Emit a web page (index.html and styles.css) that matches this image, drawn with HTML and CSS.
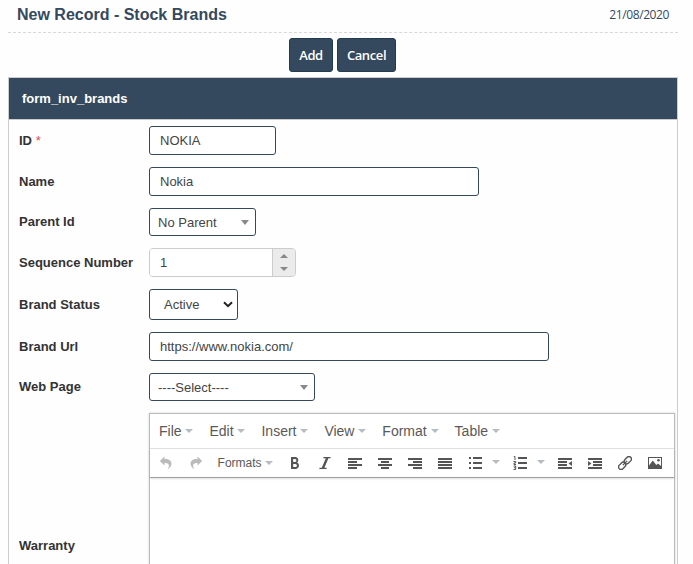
FILE: index.html
```
<!DOCTYPE html>
<html lang="en">
<head>
    <meta charset="UTF-8">
    <meta name="viewport" content="width=device-width, initial-scale=1.0">
    <title>New Record - Stock Brands</title>
    <link rel="stylesheet" href="styles.css">
</head>
<body>
    <div class="page-header">
        <h1 class="page-title">New Record - Stock Brands</h1>
        <span class="page-date">21/08/2020</span>
    </div>

    <div class="actions">
        <button class="btn btn-add" type="button">Add</button>
        <button class="btn btn-cancel" type="button">Cancel</button>
    </div>

    <div class="panel">
        <div class="panel-heading">form_inv_brands</div>
        <div class="panel-body">
            <div class="form-row">
                <label class="form-label" for="id">ID <span class="required">*</span></label>
                <input class="field field-id" id="id" type="text" value="NOKIA">
            </div>
            <div class="form-row">
                <label class="form-label" for="name">Name</label>
                <input class="field field-name" id="name" type="text" value="Nokia">
            </div>
            <div class="form-row">
                <span class="form-label label-combo">Parent Id</span>
                <div class="combo combo-parent"><span>No Parent</span><i class="arrow-down"></i></div>
            </div>
            <div class="form-row">
                <label class="form-label" for="seq">Sequence Number</label>
                <div class="spinner">
                    <input class="spinner-input" id="seq" type="text" value="1">
                    <div class="spinner-buttons">
                        <i class="arrow-up"></i>
                        <i class="arrow-down"></i>
                    </div>
                </div>
            </div>
            <div class="form-row">
                <span class="form-label">Brand Status</span>
                <div class="status-select">
                    <span>Active</span>
                    <svg width="10" height="7" viewBox="0 0 10 7"><path d="M1 1.2 L5 5.2 L9 1.2" fill="none" stroke="#222" stroke-width="2"/></svg>
                </div>
            </div>
            <div class="form-row">
                <label class="form-label" for="url">Brand Url</label>
                <input class="field field-url" id="url" type="text" value="https://www.nokia.com/">
            </div>
            <div class="form-row">
                <span class="form-label label-combo">Web Page</span>
                <div class="combo combo-web"><span>----Select----</span><i class="arrow-down"></i></div>
            </div>
            <div class="form-row form-row-editor">
                <span class="form-label">Warranty</span>
                <div class="editor">
                    <div class="menubar">
                        <span class="menu">File<i class="caret"></i></span>
                        <span class="menu">Edit<i class="caret"></i></span>
                        <span class="menu">Insert<i class="caret"></i></span>
                        <span class="menu">View<i class="caret"></i></span>
                        <span class="menu">Format<i class="caret"></i></span>
                        <span class="menu">Table<i class="caret"></i></span>
                    </div>
                    <div class="toolbar">
                        <span class="tool disabled"><svg class="icon" viewBox="0 0 14 14"><path d="M5.5 .5 L.8 5 L5.5 9.5 V7 C9.8 6.6 11 9 8.8 13.4 C15 8.5 13 2.6 5.5 3 Z"/></svg></span>
                        <span class="tool disabled"><svg class="icon" viewBox="0 0 14 14"><path d="M8.5 .5 L13.2 5 L8.5 9.5 V7 C4.2 6.6 3 9 5.2 13.4 C-1 8.5 1 2.6 8.5 3 Z"/></svg></span>
                        <span class="tool tool-formats">Formats<i class="caret"></i></span>
                        <!-- bold / italic -->
                        <span class="tool"><svg class="icon" viewBox="0 0 14 14"><path fill-rule="evenodd" d="M3 1 H7.4 C10.6 1 11.2 5.3 9 6.6 C12.2 7.8 11.4 13 7.6 13 H3 Z M5.2 3 V6 H7 C8.9 6 8.9 3 7 3 Z M5.2 7.9 V11.1 H7.2 C9.5 11.1 9.5 7.9 7.2 7.9 Z"/></svg></span>
                        <span class="tool"><svg class="icon" viewBox="0 0 14 14"><path d="M5.4 1 H12.6 V2.2 H10.4 L6.4 11.8 H8.6 V13 H1.4 V11.8 H3.8 L7.8 2.2 H5.4 Z"/></svg></span>
                        <!-- alignment -->
                        <span class="tool"><svg class="icon" viewBox="0 0 14 14"><path d="M0 2h14v2H0zM0 5h9v2H0zM0 8h14v2H0zM0 11h9v2H0z"/></svg></span>
                        <span class="tool"><svg class="icon" viewBox="0 0 14 14"><path d="M0 2h14v2H0zM3 5h8v2H3zM0 8h14v2H0zM3 11h8v2H3z"/></svg></span>
                        <span class="tool"><svg class="icon" viewBox="0 0 14 14"><path d="M0 2h14v2H0zM5 5h9v2H5zM0 8h14v2H0zM5 11h9v2H5z"/></svg></span>
                        <span class="tool"><svg class="icon" viewBox="0 0 14 14"><path d="M0 2h14v2H0zM0 5h14v2H0zM0 8h14v2H0zM0 11h14v2H0z"/></svg></span>
                        <!-- lists -->
                        <span class="tool tool-split"><svg class="icon" viewBox="0 0 14 14"><path d="M5 1h9v2H5zM5 6h9v2H5zM5 11h9v2H5zM1 1h2v2H1zM1 6h2v2H1zM1 11h2v2H1z"/></svg><i class="caret"></i></span>
                        <span class="tool tool-split"><svg class="icon" viewBox="0 0 14 14"><path d="M5 1h9v2H5zM5 6h9v2H5zM5 11h9v2H5z"/><path d="M.8 .5H2V4M.5 5.5H2.7V7H1V8.5H3M.5 10H2.7V13.5H.5M1 11.7H2.7" fill="none" stroke="#555"/></svg><i class="caret"></i></span>
                        <!-- indent -->
                        <span class="tool"><svg class="icon" viewBox="0 0 14 14"><path d="M0 2h14v2H0zM0 5h9v2H0zM0 8h9v2H0zM0 11h14v2H0zM14 5v5l-3.5-2.5z"/></svg></span>
                        <span class="tool"><svg class="icon" viewBox="0 0 14 14"><path d="M0 2h14v2H0zM5 5h9v2H5zM5 8h9v2H5zM0 11h14v2H0zM0 5v5l3.5-2.5z"/></svg></span>
                        <span class="tool"><svg class="icon" viewBox="0 0 14 14"><g fill="none" stroke="#555" stroke-width="1.4" transform="rotate(-45 7 7)"><rect x="-1" y="4.5" width="8" height="5" rx="2.5"/><rect x="7" y="4.5" width="8" height="5" rx="2.5"/><path d="M4 7h6"/></g></svg></span>
                        <span class="tool"><svg class="icon" viewBox="0 0 14 14"><path fill-rule="evenodd" d="M0 1h14v12H0zM1 2v10h12V2z"/><path d="M1 12V9.5L4.8 4.5L8.3 9L10 7.5L13 10V12z"/><circle cx="10.5" cy="4.3" r="1.3"/></svg></span>
                    </div>
                </div>
            </div>
        </div>
    </div>
</body>
</html>
```

FILE: styles.css
```
* {
    box-sizing: border-box;
}
body {
    display: flex;
    flex-direction: column;
    margin: 0;
    padding: 0 15px 0 8px;
    height: 564px;
    overflow: hidden;
    background: #fefefe;
    color: #333;
    font-family: "Liberation Sans", Arial, sans-serif;
    font-size: 13px;
}
.page-header {
    display: flex;
    justify-content: space-between;
    align-items: center;
    height: 33px;
    padding: 0 9px 3px;
    border-bottom: 1px dashed #d8d8d8;
    color: #34495e;
}
.page-title {
    margin: 0;
    font-size: 16px;
    font-weight: bold;
}
.page-date {
    font-family: "Open Sans", sans-serif;
    font-size: 12px;
    letter-spacing: -0.4px;
}
.actions {
    display: flex;
    justify-content: center;
    gap: 4px;
    height: 44px;
    padding: 5px 1px 0 0;
}
.btn {
    height: 34px;
    padding: 0;
    border: 1px solid #243b4c;
    border-radius: 3px;
    background: #34495e;
    color: #fff;
    font-family: "Open Sans", sans-serif;
    font-size: 13px;
    font-weight: 600;
    letter-spacing: -0.4px;
}
.btn-add {
    width: 44px;
}
.btn-cancel {
    width: 59px;
}
.panel {
    display: flex;
    flex: 1;
    flex-direction: column;
    border: 1px solid #ccc;
    border-bottom: 0;
}
.panel-heading {
    height: 42px;
    padding-left: 13px;
    border-bottom: 1px solid #ccc;
    background: #34495e;
    color: #fff;
    font-weight: bold;
    line-height: 41px;
}
.panel-body {
    display: flex;
    flex: 1;
    flex-direction: column;
    gap: 12px;
    padding: 6px 2px 0 10px;
}
.form-row {
    display: flex;
    align-items: center;
}
.form-label {
    width: 130px;
    flex: none;
    font-weight: bold;
}
.label-combo {
    padding-bottom: 2px;
}
.required {
    color: #e04b4b;
    font-weight: normal;
}
.field,
.combo,
.status-select {
    border: 1px solid #34495e;
    border-radius: 3px;
    background: #fff;
    color: #444;
    font-family: inherit;
    font-size: 13px;
}
.field {
    height: 29px;
    padding: 0 10px;
}
.field-id {
    width: 127px;
}
.field-name {
    width: 330px;
}
.field-url {
    width: 400px;
}
.combo {
    display: flex;
    justify-content: space-between;
    align-items: center;
    height: 28px;
    padding: 1px 6px 0 8px;
}
.combo-parent {
    width: 107px;
}
.combo-web {
    width: 166px;
}
.arrow-down,
.arrow-up {
    border: 4px solid transparent;
}
.arrow-down {
    border-top: 5px solid #888;
    border-bottom: 0;
}
.arrow-up {
    border-bottom: 4px solid #888;
    border-top: 0;
}
.spinner {
    display: flex;
    width: 147px;
    height: 29px;
    border: 1px solid #ccc;
    border-radius: 4px;
    overflow: hidden;
}
.spinner-input {
    width: 122px;
    padding: 0 10px;
    border: 0;
    background: #fff;
    color: #444;
    font-family: inherit;
    font-size: 13px;
}
.spinner-buttons {
    display: flex;
    flex: 1;
    flex-direction: column;
    align-items: center;
    justify-content: space-between;
    padding: 5px 0;
    border-left: 1px solid #ccc;
    background: #ebebeb;
}
.spinner-buttons .arrow-down {
    border-top-width: 4px;
}
.status-select {
    display: flex;
    align-items: center;
    justify-content: space-between;
    width: 89px;
    height: 31px;
    padding: 0 4px 0 14px;
}

/* rich text editor */
.form-row-editor {
    flex: 1;
    align-items: stretch;
}
.form-row-editor .form-label {
    padding-top: 125px;
}
.editor {
    width: 526px;
    border: 1px solid #bbb;
    border-bottom: 0;
    background: #fff;
    color: #595959;
    box-shadow: 0 0 2px rgba(0, 0, 0, 0.2);
}
.menubar {
    display: flex;
    align-items: center;
    height: 35px;
    padding-left: 1px;
    border-bottom: 1px solid #e2e2e2;
    font-size: 14px;
}
.menu {
    display: flex;
    align-items: center;
    padding: 0 8px;
}
.caret {
    flex: none;
    margin-left: 3.9px;
    border: 4px solid transparent;
    border-top-color: #b5bcc2;
    border-bottom: 0;
}
.toolbar {
    display: flex;
    height: 29px;
    padding-left: 1px;
    border-bottom: 1px solid #a0a0a0;
    box-shadow: 0 1px 2px rgba(0, 0, 0, 0.12);
}
.tool {
    display: flex;
    align-items: center;
    justify-content: center;
    width: 30px;
    flex: none;
}
.tool-formats {
    width: 69px;
    font-size: 12px;
}
.tool-split {
    width: 45px;
    justify-content: flex-start;
    padding-left: 8px;
}
.tool-split .caret {
    margin: -3px 0 0 10px;
}
.icon {
    width: 14px;
    height: 14px;
    fill: #555;
}
.disabled .icon {
    fill: #bbb;
}
```
